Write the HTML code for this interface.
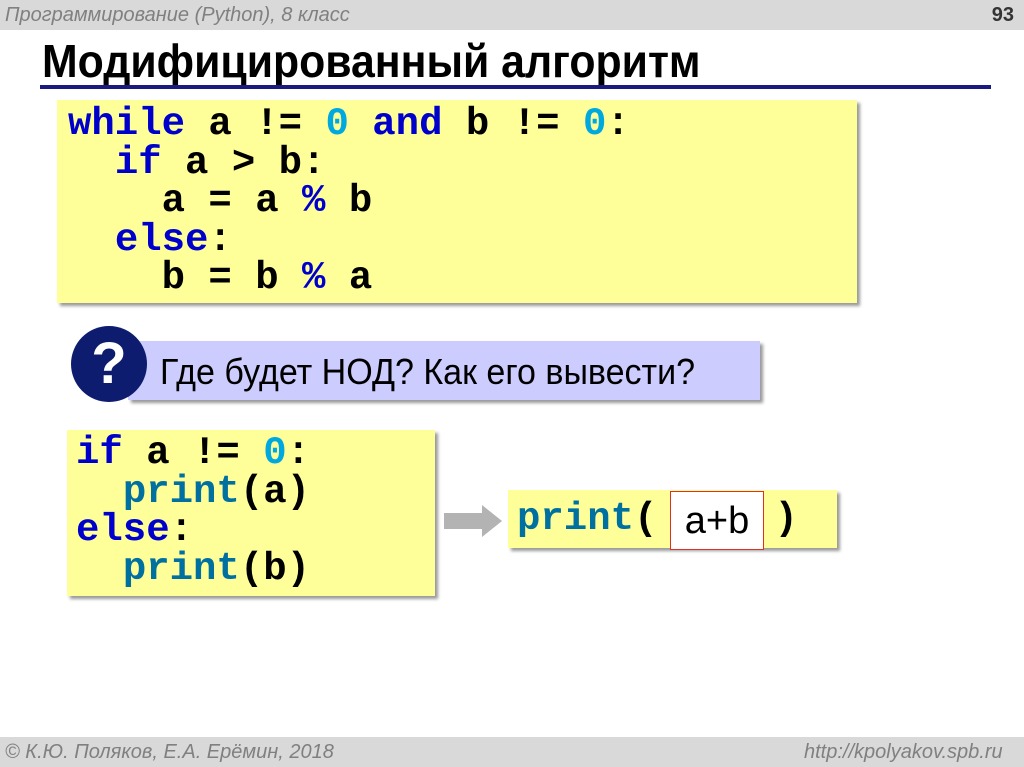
<!DOCTYPE html>
<html><head><meta charset="utf-8"><style>
body{margin:0;width:1024px;height:767px;position:relative;background:#fff;overflow:hidden;font-family:"Liberation Sans",sans-serif}
.abs{position:absolute}
.code{font-family:"Liberation Mono",monospace;font-weight:bold;font-size:39px;line-height:38.5px;white-space:pre;color:#000}
.k{color:#0000cc}.n{color:#00a8e0}.p{color:#0070a0}
.yb{background:#ffff99;box-shadow:3px 3px 3px #999}
.narrow{transform-origin:0 0;white-space:nowrap}
</style></head><body>
<div class="abs" style="left:0;top:0;width:1024px;height:30px;background:#d9d9d9"></div>
<div class="abs narrow" style="left:5px;top:4px;font-size:20px;font-style:italic;color:#808080">Программирование (Python), 8 класс</div>
<div class="abs" style="right:10px;top:4px;font-size:20px;font-weight:bold;color:#333">93</div>
<div class="abs narrow" style="left:42px;top:34px;font-size:46px;font-weight:bold;color:#000;transform:scaleX(0.93)">Модифицированный алгоритм</div>
<div class="abs" style="left:40px;top:85px;width:951px;height:4px;background:#1a1a80"></div>

<div class="abs yb code" style="left:57px;top:100px;width:800px;height:203px;box-sizing:border-box;padding:5px 0 0 11px"><span class="k">while</span> a != <span class="n">0</span> <span class="k">and</span> b != <span class="n">0</span>:
  <span class="k">if</span> a &gt; b:
    a = a <span class="k">%</span> b
  <span class="k">else</span>:
    b = b <span class="k">%</span> a</div>

<div class="abs" style="left:128px;top:341px;width:632px;height:59px;background:#ccccff;box-shadow:3px 3px 3px #999"></div>
<div class="abs narrow" style="left:160px;top:351px;font-size:36px;color:#000;transform:scaleX(0.945)">Где будет НОД? Как его вывести?</div>
<div class="abs" style="left:71px;top:326px;width:76px;height:76px;border-radius:50%;background:#0d1c6e;color:#fff;font-weight:bold;font-size:58px;text-align:center;line-height:76px">?</div>

<div class="abs yb code" style="left:67px;top:430px;width:368px;height:166px;box-sizing:border-box;padding:4px 0 0 9px"><span class="k">if</span> a != <span class="n">0</span>:
  <span class="p">print</span>(a)
<span class="k">else</span>:
  <span class="p">print</span>(b)</div>

<svg class="abs" style="left:444px;top:503px" width="60" height="36"><polygon points="0,10 38,10 38,2 58,18 38,34 38,26 0,26" fill="#b3b3b3"/></svg>

<div class="abs yb code" style="left:508px;top:490px;width:329px;height:58px;box-sizing:border-box;padding:10px 0 0 9px"><span class="p">print</span>(     )</div>
<div class="abs" style="left:670px;top:491px;width:94px;height:59px;background:#fff;border:1px solid #e03020;box-sizing:border-box;font-size:38px;text-align:center;line-height:58px">a+b</div>

<div class="abs" style="left:0;top:737px;width:1024px;height:30px;background:#d9d9d9"></div>
<div class="abs narrow" style="left:5px;top:741px;font-size:20px;font-style:italic;color:#808080">© К.Ю. Поляков, Е.А. Ерёмин, 2018</div>
<div class="abs narrow" style="left:804px;top:741px;font-size:20px;font-style:italic;color:#808080">http://kpolyakov.spb.ru</div>
</body></html>
